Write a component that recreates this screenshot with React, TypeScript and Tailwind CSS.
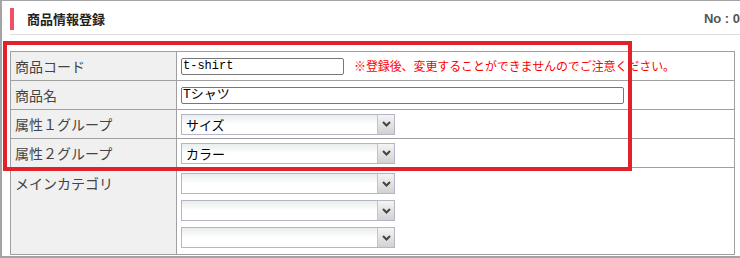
import { FC, ReactNode } from "react";

const jp = { fontFamily: '"Noto Sans CJK JP", "Liberation Sans", sans-serif' };
const mono = { fontFamily: '"Liberation Mono", "Noto Sans CJK JP", monospace' };

// fake select box, old browser look
const SelectBox: FC<{ value?: string }> = ({ value }) => (
    <div className="flex w-[214px] h-[21px] border border-[#b4b6c8] bg-gradient-to-b from-[#e9eded] via-white to-white">
        <div className="flex-1 flex items-center pl-[4px] text-[13px] text-black leading-none" style={jp}>
            {value}
        </div>
        <div className="w-[17px] flex items-center justify-center border-l border-[#c4c4c4] bg-gradient-to-b from-[#f4f4f4] to-[#d2d2d2]">
            <svg width="9" height="6" viewBox="0 0 9 6">
                <path d="M1 1 L4.5 4.5 L8 1" stroke="#444" strokeWidth="2" fill="none" />
            </svg>
        </div>
    </div>
);

const Row: FC<{ label: string; children: ReactNode; tall?: boolean }> = ({ label, children, tall }) => (
    <div className={`flex border-b border-[#a0a0a0] ${tall ? "h-[87px]" : "h-[29px]"}`}>
        <div
            className={`w-[166px] shrink-0 bg-[#f0f0f0] border-r border-[#a0a0a0] pl-[4px] text-[14px] text-[#444] flex ${tall ? "items-start pt-[5px]" : "items-center"}`}
            style={jp}
        >
            {label}
        </div>
        <div className={`flex-1 pl-[4px] flex ${tall ? "flex-col gap-[6px] pt-[5px]" : "items-center"}`}>
            {children}
        </div>
    </div>
);

export default function App() {
    return (
        <div className="relative w-[740px] h-[258px] bg-white border-l-2 border-t border-b-2 border-[#a4a4a4] overflow-hidden">
            {/* Header */}
            <div className="ml-[8px] h-[34px] flex items-start pt-[7px] border-b border-[#dcdcdc]">
                <div className="w-[4px] h-[22px] bg-[#ee5064]" />
                <div className="ml-[13px] h-[22px] flex items-center text-[13px] font-bold text-[#222]" style={jp}>
                    商品情報登録
                </div>
                <div className="ml-auto h-[22px] flex items-center text-[13px] font-bold text-[#555] whitespace-nowrap" style={{ fontFamily: '"Liberation Sans", sans-serif' }}>
                    No : 0
                </div>
            </div>

            {/* Table */}
            <div className="ml-[8px] mt-[16px] w-[725px] border-t border-l border-r border-[#a0a0a0]">
                <Row label="商品コード">
                    <input
                        readOnly
                        value="t-shirt"
                        className="w-[163px] h-[17px] border border-[#777] rounded-[2px] px-[1px] text-[12px] text-black outline-none"
                        style={mono}
                    />
                    <span className="ml-[10px] text-[12px] text-[#ff0000] tracking-[-0.1px] whitespace-nowrap" style={jp}>
                        ※登録後、変更することができませんのでご注意ください。
                    </span>
                </Row>
                <Row label="商品名">
                    <input
                        readOnly
                        value="Tシャツ"
                        className="w-[443px] h-[17px] border border-[#777] rounded-[2px] px-[1px] text-[13px] text-black outline-none"
                        style={mono}
                    />
                </Row>
                <Row label="属性１グループ">
                    <SelectBox value="サイズ" />
                </Row>
                <Row label="属性２グループ">
                    <SelectBox value="カラー" />
                </Row>
                <Row label="メインカテゴリ" tall>
                    <SelectBox />
                    <SelectBox />
                    <SelectBox />
                </Row>
            </div>

            {/* red highlight */}
            <div className="absolute left-[1px] top-[40px] w-[629px] h-[130px] border-4 border-[#e3212b] pointer-events-none" />
        </div>
    );
}
